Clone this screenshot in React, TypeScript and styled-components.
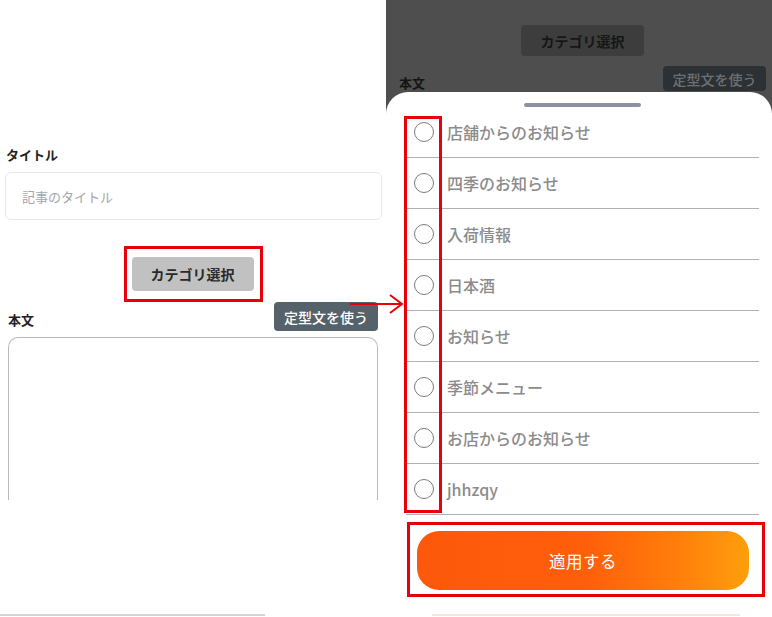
import React, { FC } from 'react';
import styled, { createGlobalStyle } from 'styled-components';

const GlobalStyle = createGlobalStyle`
  html, body {
    margin: 0;
    padding: 0;
    background: #ffffff;
  }

  body {
    font-family: 'Noto Sans CJK JP', 'Noto Sans', sans-serif;
    -webkit-font-smoothing: antialiased;
  }

  * {
    box-sizing: border-box;
  }
`;

const categories: string[] = [
  '店舗からのお知らせ',
  '四季のお知らせ',
  '入荷情報',
  '日本酒',
  'お知らせ',
  '季節メニュー',
  'お店からのお知らせ',
  'jhhzqy',
];

const Page = styled.div`
  position: relative;
  display: flex;
  width: 772px;
  height: 617px;
  overflow: hidden;
`;

/* ---------- editor (left) ---------- */

const EditorPane = styled.div`
  display: flex;
  flex: none;
  flex-direction: column;
  width: 386px;
  padding-top: 146px;
  background: #ffffff;
`;

const FieldLabel = styled.div<{ $dim?: boolean }>`
  font-size: 13px;
  font-weight: 700;
  line-height: 18px;
  color: ${({ $dim }) => ($dim ? '#141414' : '#1f1f1f')};
`;

const TitleLabel = styled(FieldLabel)`
  margin-left: 6px;
`;

const TitleInput = styled.div`
  display: flex;
  align-items: center;
  width: 377px;
  height: 48px;
  margin: 8px 0 0 5px;
  padding-left: 16px;
  border: 1px solid #e6e7ea;
  border-radius: 6px;
  font-size: 13px;
  color: #a2a6ae;
`;

const Highlight = styled.div`
  border: 3px solid #e8000b;
`;

const CategoryHighlight = styled(Highlight)`
  align-self: center;
  margin-top: 26px;
  padding: 8px 6px 8px 5px;
`;

const CategoryButton = styled.div<{ $dim?: boolean }>`
  display: flex;
  align-items: center;
  justify-content: center;
  width: 122px;
  height: 34px;
  border-radius: 4px;
  background: ${({ $dim }) => ($dim ? '#3d3d3d' : '#c1c1c1')};
  color: ${({ $dim }) => ($dim ? '#161616' : '#2a2a2a')};
  font-size: 14px;
  font-weight: 700;
`;

const BodyRow = styled.div`
  display: flex;
  align-items: center;
  justify-content: space-between;
  height: 29px;
  margin: 0 8px;
`;

const BodyLabel = styled(FieldLabel)`
  margin-top: 6px;
`;

const TemplateButton = styled.div<{ $dim?: boolean }>`
  display: flex;
  align-items: center;
  justify-content: center;
  width: 104px;
  height: 29px;
  border-radius: 4px;
  background: ${({ $dim }) => ($dim ? '#2c3135' : '#56626a')};
  color: ${({ $dim }) => ($dim ? '#6c7074' : '#ffffff')};
  font-size: 14px;
  font-weight: 500;
`;

const BodyArea = styled.div`
  height: 163px;
  margin: 6px 8px 0;
  border: 1.5px solid #b9b9b9;
  border-bottom: none;
  border-radius: 10px 10px 0 0;
`;

const PageEdge = styled.div<{ $tint: string; $inset: number; $width: number }>`
  width: ${({ $width }) => $width}px;
  height: 2px;
  margin: auto 0 1px ${({ $inset }) => $inset}px;
  background: ${({ $tint }) => $tint};
`;

/* ---------- category sheet (right) ---------- */

const SheetPane = styled.div`
  display: flex;
  flex: none;
  flex-direction: column;
  width: 386px;
  background: #4e4e4e;
`;

const DimmedPage = styled.div`
  display: flex;
  flex: none;
  flex-direction: column;
  height: 92px;
  padding-top: 25px;
  overflow: hidden;

  ${CategoryButton} {
    margin-left: 135px;
    height: 35px;
    width: 123px;
  }
`;

const DimmedRow = styled.div`
  display: flex;
  align-items: flex-start;
  justify-content: space-between;
  margin: 10px 6px 0 13px;

  ${FieldLabel} {
    margin-top: 8px;
  }

  ${TemplateButton} {
    width: 103px;
    height: 25px;
  }
`;

const Sheet = styled.div`
  display: flex;
  flex: 1;
  flex-direction: column;
  border-radius: 22px 22px 0 0;
  background: #ffffff;
`;

const Handle = styled.div`
  width: 117px;
  height: 4px;
  margin: 11px 0 0 138px;
  border-radius: 2px;
  background: #8d91a3;
`;

const CategoryList = styled.ul`
  position: relative;
  width: 353px;
  margin: 0 0 0 20px;
  padding: 0;
  list-style: none;
`;

const CategoryRow = styled.li`
  display: flex;
  align-items: center;
  gap: 13px;
  height: 51px;
  padding-left: 8px;
  border-bottom: 1.5px solid #b1b1b1;
  color: #8b8b8b;
  font-size: 16px;
  font-weight: 500;
`;

const Radio = styled.span`
  flex: none;
  width: 20px;
  height: 20px;
  border: 1.3px solid #7c7c7c;
  border-radius: 50%;
`;

const RadioHighlight = styled(Highlight)`
  position: absolute;
  left: -2px;
  top: 9px;
  width: 38px;
  height: 397px;
  pointer-events: none;
`;

const ApplyHighlight = styled(Highlight)`
  width: 358px;
  margin: 7px 0 0 21px;
  padding: 6px 13px 4px 7px;
`;

const ApplyButton = styled.div`
  display: flex;
  align-items: center;
  justify-content: center;
  height: 59px;
  border-radius: 22px;
  background: linear-gradient(90deg, #fd580b 0%, #ff5e0a 50%, #ff7d0b 78%, #fe9f0c 100%);
  color: #ffffff;
  font-size: 16.5px;
  font-weight: 400;
  letter-spacing: 0.5px;
`;

const Pointer = styled.svg`
  position: absolute;
  left: 348px;
  top: 293px;
  pointer-events: none;
`;

const App: FC = () => {
  return (
    <Page>
      <GlobalStyle />

      <EditorPane>
        <TitleLabel>タイトル</TitleLabel>
        <TitleInput>記事のタイトル</TitleInput>
        <CategoryHighlight>
          <CategoryButton>カテゴリ選択</CategoryButton>
        </CategoryHighlight>
        <BodyRow>
          <BodyLabel>本文</BodyLabel>
          <TemplateButton>定型文を使う</TemplateButton>
        </BodyRow>
        <BodyArea />
        <PageEdge $tint='#d6d6d6' $inset={0} $width={265} />
      </EditorPane>

      <SheetPane>
        <DimmedPage>
          <CategoryButton $dim>カテゴリ選択</CategoryButton>
          <DimmedRow>
            <FieldLabel $dim>本文</FieldLabel>
            <TemplateButton $dim>定型文を使う</TemplateButton>
          </DimmedRow>
        </DimmedPage>

        <Sheet>
          <Handle />
          <CategoryList>
            {categories.map((name: string): JSX.Element => (
              <CategoryRow key={name}>
                <Radio />
                {name}
              </CategoryRow>
            ))}
            <RadioHighlight />
          </CategoryList>
          <ApplyHighlight>
            <ApplyButton>適用する</ApplyButton>
          </ApplyHighlight>
          <PageEdge $tint='#ffe2da' $inset={46} $width={308} />
        </Sheet>
      </SheetPane>

      <Pointer width='58' height='24' viewBox='0 0 58 24'>
        <line x1='2' y1='11' x2='54' y2='11' stroke='#e8000b' strokeWidth='2' />
        <polyline
          points='42,2 54,11 42,20'
          fill='none'
          stroke='#e8000b'
          strokeWidth='2'
        />
      </Pointer>
    </Page>
  );
};

export default App;
